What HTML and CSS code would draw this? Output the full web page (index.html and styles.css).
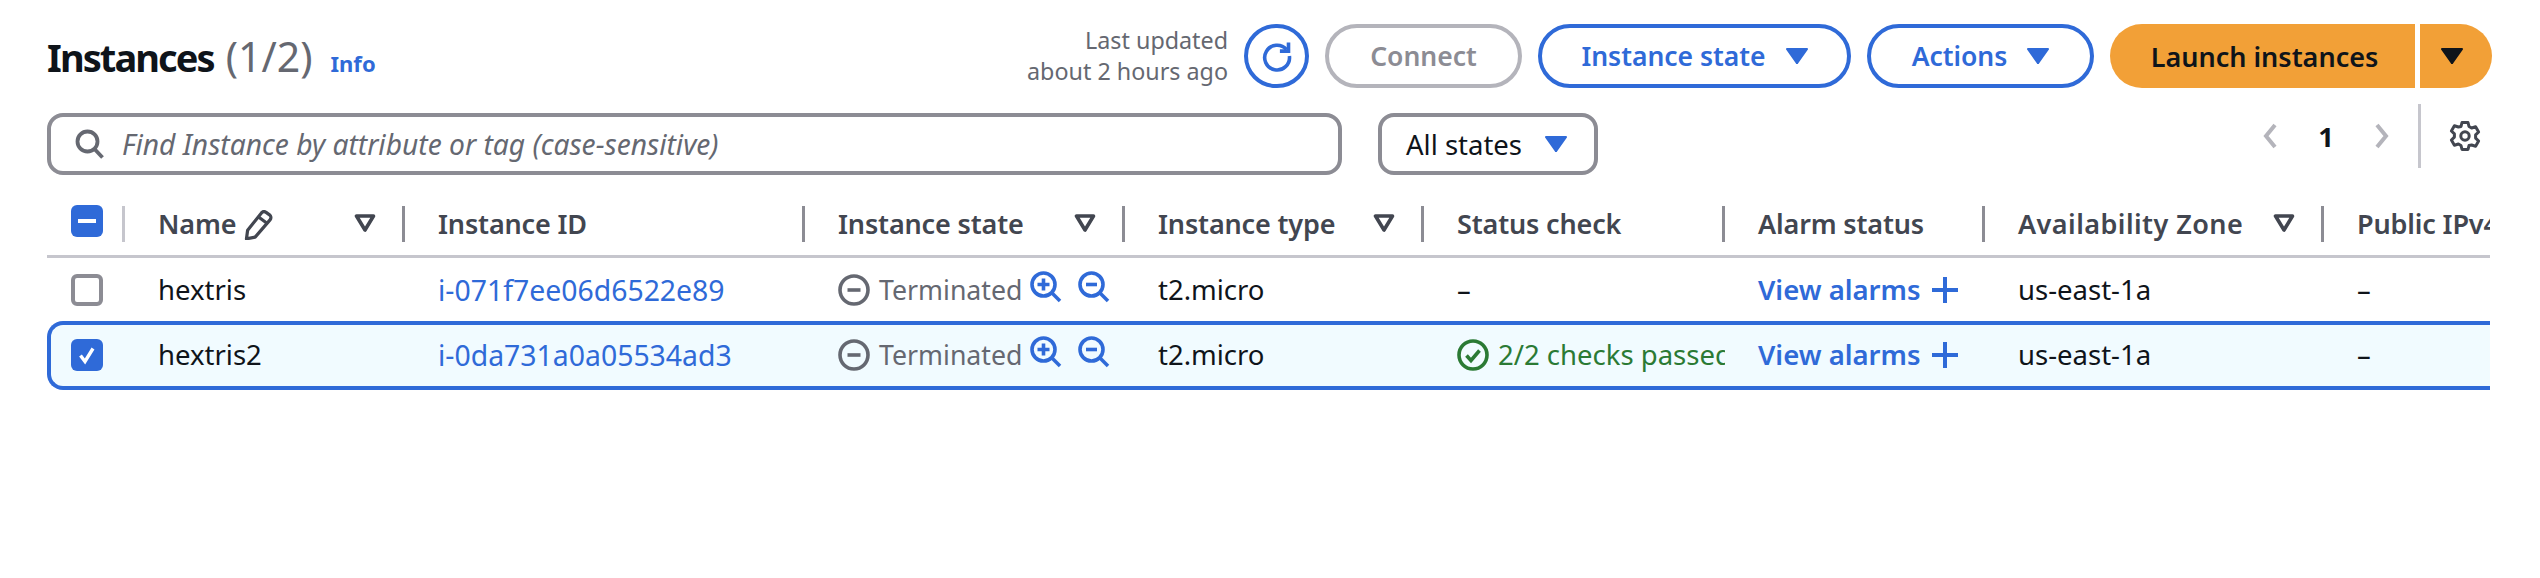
FILE: index.html
```html
<!DOCTYPE html>
<html lang="en">
<head>
    <meta charset="UTF-8">
    <title>Instances</title>
    <link rel="stylesheet" href="styles.css">
</head>
<body>
    <svg class="defs" width="0" height="0">
        <symbol id="caret" viewBox="0 0 22 16"><path d="M1 0h20a1 1 0 0 1 .9 1.5L12 15.4a1 1 0 0 1-2 0L.1 1.5A1 1 0 0 1 1 0z"/></symbol>
        <symbol id="filter" viewBox="0 0 22 18"><path d="M2.5 2h17L11 16z" fill="none" stroke="#424650" stroke-width="3.6" stroke-linejoin="round"/></symbol>
        <symbol id="terminated" viewBox="0 0 32 32"><circle cx="16" cy="16" r="14" fill="none" stroke="#656871" stroke-width="3.6"/><path d="M9.5 16h13" stroke="#656871" stroke-width="3.6"/></symbol>
        <symbol id="zoomin" viewBox="0 0 32 32"><circle cx="13.5" cy="13.5" r="11.5" fill="none" stroke="#2f6ad8" stroke-width="3.6"/><path d="M22 22l8 8" stroke="#2f6ad8" stroke-width="3.6"/><path d="M7.5 13.5h12M13.5 7.5v12" stroke="#2f6ad8" stroke-width="3.6"/></symbol>
        <symbol id="zoomout" viewBox="0 0 32 32"><circle cx="13.5" cy="13.5" r="11.5" fill="none" stroke="#2f6ad8" stroke-width="3.6"/><path d="M22 22l8 8" stroke="#2f6ad8" stroke-width="3.6"/><path d="M8 13.5h11" stroke="#2f6ad8" stroke-width="3.6"/></symbol>
    </svg>

    <main class="page">
        <div class="top-row">
            <h1 class="title">Instances <span class="count">(1/2)</span> <a class="info">Info</a></h1>
            <div class="actions">
                <p class="updated">Last updated<br>about 2 hours ago</p>
                <button class="btn btn-icon" type="button">
                    <svg width="32" height="32" viewBox="0 0 32 32" fill="none" stroke="#2f6ad8" stroke-width="3.6"><path d="M25.5 9.5A12.4 12.4 0 1 0 28.4 16"/><path d="M27.5 2.5v8.6h-8.6"/></svg>
                </button>
                <button class="btn btn-disabled btn-connect" type="button">Connect</button>
                <button class="btn btn-state" type="button">Instance state <svg class="caret"><use href="#caret"/></svg></button>
                <button class="btn btn-actions" type="button">Actions <svg class="caret"><use href="#caret"/></svg></button>
                <div class="split">
                    <button class="btn-primary btn-launch" type="button">Launch instances</button>
                    <button class="btn-primary btn-drop" type="button" aria-label="More"><svg class="caret caret-dark"><use href="#caret"/></svg></button>
                </div>
            </div>
        </div>

        <div class="filter-row">
            <div class="search">
                <svg width="30" height="30" viewBox="0 0 30 30" fill="none" stroke="#656871" stroke-width="3.8"><circle cx="12.5" cy="12.5" r="10"/><path d="M19.5 20l8 8.5"/></svg>
                <span class="placeholder">Find Instance by attribute or tag (case-sensitive)</span>
            </div>
            <div class="select">All states <svg class="caret"><use href="#caret"/></svg></div>
            <div class="pager">
                <svg class="chev" width="16" height="26" viewBox="0 0 16 26"><path d="M13 2L4 13l9 11"/></svg>
                <span class="page-no">1</span>
                <svg class="chev" width="16" height="26" viewBox="0 0 16 26"><path d="M3 2l9 11-9 11"/></svg>
                <span class="pager-line"></span>
                <svg width="32" height="32" viewBox="0 0 32 32" fill="none" stroke="#424650" stroke-width="3" stroke-linejoin="round"><path d="M13 2.5h6l1 4 2.6 1.500 4-1.200 3 5.200-3 2.900v3.200l3 2.900-3 5.200-4-1.200L20 25.500l-1 4h-6l-1-4-2.600-1.500-4 1.200-3-5.200 3-2.900v-3.200l-3-2.900 3-5.200 4 1.200L12 6.500z"/><circle cx="16" cy="16" r="4.200"/></svg>
            </div>
        </div>

        <div class="table-wrap">
            <table class="table">
                <colgroup>
                    <col class="c-check"><col class="c-name"><col class="c-id"><col class="c-state"><col class="c-type"><col class="c-status"><col class="c-alarm"><col class="c-az"><col class="c-ip">
                </colgroup>
                <thead>
                    <tr>
                        <th class="check-cell light"><span class="box box-on"><span class="dash"></span></span></th>
                        <th>Name <svg class="pencil" width="30" height="30" viewBox="2 2 26 26" fill="none" stroke="#424650" stroke-width="2.800" stroke-linejoin="round"><path d="M5 27l1-7.500L18 4.500a3 3 0 0 1 4-.5l3 2.200a3 3 0 0 1 .6 4.100L12.500 25.500z"/><path d="M15.500 8l7 5.200"/></svg><svg class="filter"><use href="#filter"/></svg></th>
                        <th>Instance ID</th>
                        <th>Instance state<svg class="filter"><use href="#filter"/></svg></th>
                        <th>Instance type<svg class="filter"><use href="#filter"/></svg></th>
                        <th>Status check</th>
                        <th>Alarm status</th>
                        <th class="az-head">Availability Zone<svg class="filter"><use href="#filter"/></svg></th>
                        <th class="last">Public IPv4 DNS</th>
                    </tr>
                </thead>
                <tbody>
                    <tr>
                        <td class="check-cell"><span class="box"></span></td>
                        <td>hextris</td>
                        <td><a class="link">i-071f7ee06d6522e89</a></td>
                        <td>
                            <div class="state"><svg class="ico"><use href="#terminated"/></svg><span class="state-text">Terminated</span><svg class="ico zoom-a"><use href="#zoomin"/></svg><svg class="ico zoom-b"><use href="#zoomout"/></svg></div>
                        </td>
                        <td>t2.micro</td>
                        <td>–</td>
                        <td><a class="alarm">View alarms <svg class="plus" width="26" height="26" viewBox="0 0 26 26"><path d="M0 13h26M13 0v26"/></svg></a></td>
                        <td>us-east-1a</td>
                        <td>–</td>
                    </tr>
                    <tr class="selected">
                        <td class="check-cell"><span class="box box-on"><svg width="20" height="20" viewBox="0 0 20 20" fill="none" stroke="#fff" stroke-width="3.400"><path d="M3.500 10.500l4.500 6 8-13"/></svg></span></td>
                        <td>hextris2</td>
                        <td><a class="link">i-0da731a0a05534ad3</a></td>
                        <td>
                            <div class="state"><svg class="ico"><use href="#terminated"/></svg><span class="state-text">Terminated</span><svg class="ico zoom-a"><use href="#zoomin"/></svg><svg class="ico zoom-b"><use href="#zoomout"/></svg></div>
                        </td>
                        <td>t2.micro</td>
                        <td class="clip">
                            <div class="passed"><svg class="ico" viewBox="0 0 32 32" fill="none" stroke="#2b7a34" stroke-width="3.600"><circle cx="16" cy="16" r="14"/><path d="M9.500 16.500l4.500 5 8.500-10"/></svg><span>2/2 checks passed</span></div>
                        </td>
                        <td><a class="alarm">View alarms <svg class="plus" width="26" height="26" viewBox="0 0 26 26"><path d="M0 13h26M13 0v26"/></svg></a></td>
                        <td>us-east-1a</td>
                        <td>–</td>
                    </tr>
                </tbody>
            </table>
        </div>
    </main>
</body>
</html>
```

FILE: styles.css
```css
* {
    box-sizing: border-box;
}
body {
    margin: 0;
    background: #fff;
    color: #0f141a;
    font-family: "Noto Sans", sans-serif;
    font-size: 27.500px;
}
.defs {
    position: absolute;
}
.page {
    width: 2443px;
    margin-left: 47px;
    padding-top: 24px;
}

/* top row */
.top-row {
    display: flex;
    justify-content: space-between;
    align-items: center;
    height: 64px;
}
.title {
    margin: 0;
    font-size: 38px;
    font-weight: 700;
    letter-spacing: -1.900px;
    white-space: nowrap;
}
.count {
    margin-left: 4px;
    color: #656871;
    font-size: 41px;
    font-weight: 400;
    letter-spacing: 0;
}
.info {
    margin-left: 10px;
    color: #2f6ad8;
    font-size: 22px;
    font-weight: 700;
    letter-spacing: 0;
}
.actions {
    display: flex;
    align-items: center;
    gap: 16px;
    margin-right: -2px;
}
.updated {
    margin: 0;
    color: #656871;
    font-size: 23.300px;
    line-height: 31px;
    text-align: right;
}
.btn {
    display: flex;
    align-items: center;
    justify-content: center;
    height: 64px;
    padding: 0;
    background: #fff;
    border: 4px solid #2f6ad8;
    border-radius: 32px;
    color: #2f6ad8;
    font-family: inherit;
    font-size: 26.500px;
    font-weight: 600;
}
.btn-icon {
    width: 65px;
}
.btn-disabled {
    border-color: #b4b4bb;
    color: #8c8c94;
}
.btn-connect {
    width: 197px;
}
.btn-state {
    width: 313px;
}
.btn-actions {
    width: 227px;
}
.caret {
    width: 22px;
    height: 16px;
    margin-left: 20px;
    fill: #2f6ad8;
}
.caret-dark {
    margin-left: 0;
    fill: #0f141a;
}
.split {
    display: flex;
    gap: 5px;
}
.btn-primary {
    display: flex;
    align-items: center;
    justify-content: center;
    height: 64px;
    padding: 0;
    background: #f2a037;
    border: none;
    color: #0f141a;
    font-family: inherit;
    font-size: 27px;
    font-weight: 600;
}
.btn-launch {
    width: 305px;
    padding-left: 4px;
    border-radius: 32px 0 0 32px;
}
.btn-drop {
    width: 72px;
    padding-right: 8px;
    border-radius: 0 32px 32px 0;
}

/* search row */
.filter-row {
    display: flex;
    align-items: flex-start;
    margin-top: 25px;
}
.search {
    display: flex;
    align-items: center;
    gap: 17px;
    width: 1295px;
    height: 62px;
    padding-left: 24px;
    border: 4px solid #8c8c94;
    border-radius: 16px;
}
.placeholder {
    color: #656871;
    font-size: 28.200px;
    font-style: italic;
}
.select {
    display: flex;
    align-items: center;
    justify-content: center;
    width: 220px;
    height: 62px;
    margin-left: 36px;
    padding-right: 3px;
    border: 4px solid #8c8c94;
    border-radius: 16px;
}
.select .caret {
    margin-left: 23px;
}
.pager {
    display: flex;
    align-items: center;
    height: 64px;
    margin: -9px 9px 0 auto;
}
.chev path {
    fill: none;
    stroke: #b4b4bb;
    stroke-width: 4;
}
.page-no {
    width: 96px;
    text-align: center;
    font-weight: 700;
}
.pager-line {
    width: 3px;
    height: 64px;
    margin: 0 28px;
    background: #c6c6cd;
}

/* table */
.table-wrap {
    margin-top: 20px;
    overflow: hidden;
}
.table {
    width: 2576px;
    table-layout: fixed;
    border-collapse: separate;
    border-spacing: 0;
}
.c-check { width: 78px; }
.c-name { width: 280px; }
.c-id { width: 400px; }
.c-state { width: 320px; }
.c-type { width: 299px; }
.c-status { width: 301px; }
.c-alarm { width: 260px; }
.c-az { width: 339px; }
.c-ip { width: 299px; }
th {
    position: relative;
    height: 63px;
    padding: 0 0 4px 33px;
    border-bottom: 3px solid #c6c6cd;
    color: #424650;
    font-size: 27px;
    font-weight: 600;
    letter-spacing: -0.150px;
    text-align: left;
    white-space: nowrap;
}
th.az-head {
    letter-spacing: 0.450px;
}
th::after {
    content: "";
    position: absolute;
    top: 11px;
    right: 0;
    width: 3px;
    height: 36px;
    background: #8c8c94;
}
th.light::after {
    background: #c6c6cd;
}
th.last::after {
    display: none;
}
td {
    height: 63px;
    padding: 0 0 0 33px;
    white-space: nowrap;
}
.check-cell {
    padding: 0 0 0 24px;
}
th.check-cell {
    padding: 0 0 8px 24px;
}
.box {
    display: flex;
    align-items: center;
    justify-content: center;
    width: 32px;
    height: 32px;
    border: 4px solid #8c8c94;
    border-radius: 6px;
    background: #fff;
}
.box-on {
    border: none;
    background: #2f6ad8;
}
.dash {
    width: 18px;
    height: 4px;
    background: #fff;
}
.filter {
    position: absolute;
    top: 19px;
    right: 29px;
    width: 22px;
    height: 18px;
}
.pencil {
    vertical-align: -6px;
}
.link {
    color: #2f6ad8;
    font-size: 28.400px;
}
.state {
    display: flex;
    align-items: center;
}
.ico {
    flex: none;
    width: 32px;
    height: 32px;
}
.state-text {
    margin-left: 9px;
    color: #656871;
    font-size: 26.700px;
}
.zoom-a {
    margin: -6px 0 0 8px;
}
.zoom-b {
    margin: -6px 0 0 16px;
}
.alarm {
    display: flex;
    align-items: center;
    gap: 11px;
    color: #2f6ad8;
    font-weight: 600;
}
.plus path {
    fill: none;
    stroke: #2f6ad8;
    stroke-width: 4;
}
.clip {
    overflow: hidden;
}
.passed {
    display: flex;
    align-items: center;
    gap: 9px;
    color: #2b7a34;
}
.selected td {
    height: 69px;
    padding-bottom: 2px;
    background: #f1fbff;
    border-top: 4px solid #2f6ad8;
    border-bottom: 4px solid #2f6ad8;
}
.selected td.check-cell {
    padding-left: 20px;
    border-left: 4px solid #2f6ad8;
    border-radius: 16px 0 0 16px;
}
```
